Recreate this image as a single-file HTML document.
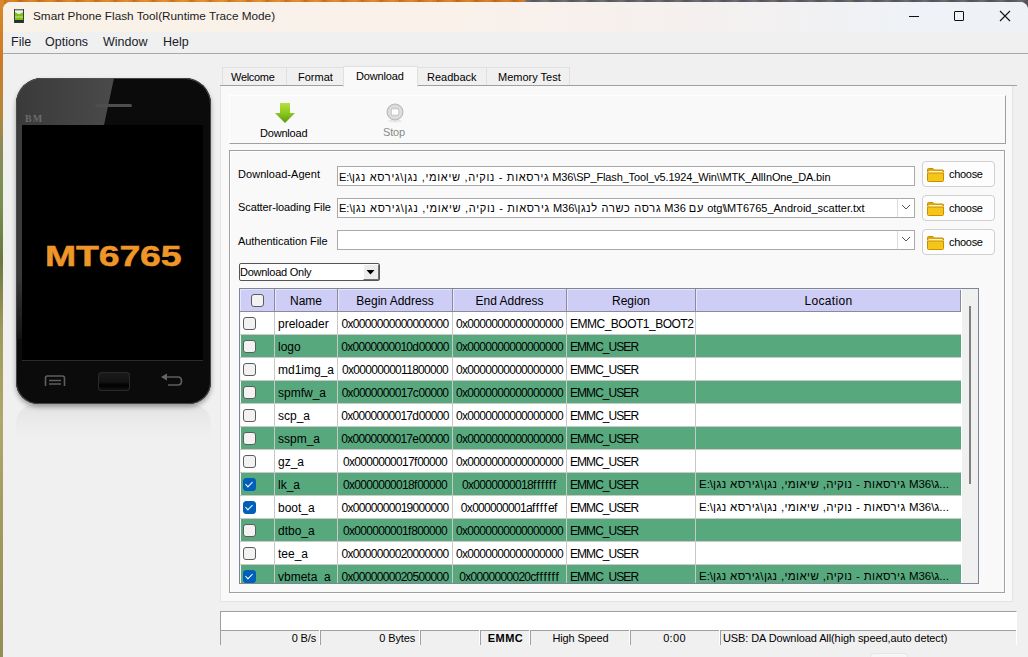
<!DOCTYPE html>
<html><head><meta charset="utf-8">
<style>
*{box-sizing:border-box}
html,body{margin:0;padding:0}
body{width:1028px;height:657px;overflow:hidden;position:relative;font-family:"Liberation Sans",sans-serif;background:#4b5262}
.a{position:absolute}
#wp{left:0;top:0;width:1028px;height:657px;background:repeating-linear-gradient(90deg,rgba(90,40,0,0.25) 0,rgba(90,40,0,0) 7px,rgba(255,200,80,0.15) 13px,rgba(90,40,0,0.1) 19px),linear-gradient(90deg,#d47c22 0,#e08a2c 200px,#d8802a 400px,#d27624 524px,#5c6272 526px,#555b6c 1028px)}
#wpl{left:0;top:0;width:4px;height:657px;background:linear-gradient(180deg,#d9892c 0,#cc7a26 60px,#b8863a 110px,#8a8a58 150px,#7a9050 200px,#6a7840 260px,#a09a58 330px,#b0a868 420px,#a29a5e 520px,#958d56 657px)}
#win{left:3px;top:2px;width:1025px;height:670px;background:#f0f0f0;border-radius:8px 8px 0 0;overflow:hidden}
#title{left:3px;top:2px;width:1025px;height:30px;border-radius:8px 8px 0 0;background:linear-gradient(90deg,#f9f2e8 0,#f9f1ea 450px,#f6f0ee 650px,#eff2f6 900px,#eef2f6 1025px)}
.tx{white-space:nowrap;line-height:1}
.ui{font-size:12px;color:#1b1b1b}
.t11{font-size:11px;color:#000;letter-spacing:0px}
.line{background:#a0a0a0}
.fl{font-size:11px;color:#000;white-space:nowrap;line-height:1;letter-spacing:0.05px}
.he{letter-spacing:0.7px}
.fld{position:absolute;left:337px;width:578px;height:20px;background:#fff;border:1px solid #a9a9a9}
.fld .v{position:absolute;left:1px;top:5px}
.ddb{position:absolute;right:0;top:0;width:17px;height:18px;background:#fff;border-left:1px solid #dcdcdc}
.ddb svg{position:absolute;left:3px;top:5px}
.btn{position:absolute;left:922px;width:73px;height:26px;background:#fdfdfd;border:1px solid #d0d0d0;border-radius:4px}
.btn .ic{position:absolute;left:4px;top:6px;width:17px;height:14px}
.btn .bt{position:absolute;left:26px;top:7px}
#tbl{position:absolute;left:239px;top:288px;width:740px;height:296px;border:1px solid #7c8694;background:#fff;overflow:hidden}
.hdr{position:absolute;left:0;top:0;width:721px;height:23px;background:#cdcdf5;border-bottom:1px solid #8a8a9c;border-right:1px solid #8a8a9c}
.hc{position:absolute;top:0;height:22px;border-right:1px solid #8a8a9c;box-shadow:inset 1px 1px 0 #e6e6fc;text-align:center;padding-top:6px;font-size:12px!important;letter-spacing:0px!important}
.row{position:absolute;left:0;width:721px;height:23px;background:#fff;border-bottom:1px solid #cdc8c8}
.row.g{background:#57a87d}
.row::before{content:"";position:absolute;left:0;top:0;width:1px;height:22px;background:#f4f4f4;z-index:1}
.c{position:absolute;top:0;height:22px;padding-top:6px;border-right:1px solid #c8c8c8;font-size:12px;white-space:nowrap;line-height:1;letter-spacing:0px;color:#000;overflow:hidden}
.row .c.ck{left:0;width:35px}
.row .c.nm{left:35px;width:63px;padding-left:3px}
.row .c.bg{left:98px;width:115px;text-align:center;letter-spacing:-0.7px}
.row .c.en{left:213px;width:114px;text-align:center;letter-spacing:-0.7px}
.row .c.rg{left:327px;width:129px;padding-left:3px;letter-spacing:-0.5px}
.row .c.lc{left:456px;width:265px;padding-left:3px;border-right:none;font-size:11.5px}
.cb{position:absolute;left:3px;top:5px;width:13px;height:13px;border:1px solid #5c5c5c;border-radius:3px;background:#f2f2f2}
.cb.on{background:#005fb8;border-color:#005fb8}
.cb.on::after{content:"";position:absolute;left:3px;top:1px;width:3px;height:6px;border:solid #fff;border-width:0 1.5px 1.5px 0;transform:rotate(45deg)}
#sb{position:absolute;left:721px;top:0;width:17px;height:294px;background:#f0f0f0;border-left:1px solid #fff}
.st{position:absolute;top:630px;height:15px;background:#f0f0f0;border-top:1px solid #a0a0a0;border-left:1px solid #a0a0a0}
.st .tx{position:absolute;top:2px;font-size:11px;line-height:1;letter-spacing:-0.15px;color:#000;white-space:nowrap}

</style></head>
<body>
<div id="wp" class="a"></div>
<div id="wpl" class="a"></div>
<div id="win" class="a"></div>
<div id="title" class="a"></div>
<!-- app icon -->
<svg class="a" style="left:14px;top:9px" width="10" height="14" viewBox="0 0 10 14"><rect x="0" y="0" width="10" height="14" fill="#3c3c40"/><rect x="1" y="0.5" width="8" height="1" fill="#a8a8a8"/><rect x="1" y="1.5" width="8" height="9.5" fill="#7cc010"/><path d="M1 1.5H9V3.2L5 5.2L1 3.2Z" fill="#eef0f4"/><rect x="1" y="7.5" width="8" height="1" fill="#c8e8a0"/><rect x="1" y="11" width="8" height="2.5" fill="#2a2a30"/></svg>
<!-- title text -->
<div class="a tx ui" style="left:33px;top:10px;font-size:11.75px">Smart Phone Flash Tool(Runtime Trace Mode)</div>
<!-- window controls -->
<div class="a" style="left:909px;top:16px;width:10px;height:1px;background:#111"></div>
<div class="a" style="left:954px;top:11px;width:10px;height:10px;border:1px solid #111;border-radius:1px"></div>
<svg class="a" style="left:999px;top:10px" width="12" height="12" viewBox="0 0 12 12"><path d="M1 1L11 11M11 1L1 11" stroke="#111" stroke-width="1.1"/></svg>
<!-- menu bar -->
<div class="a" style="left:3px;top:32px;width:1025px;height:21px;background:#f0f0f0"></div>
<div class="a tx ui" style="left:11px;top:36px;font-size:12.5px;color:#1a1a2a">File</div>
<div class="a tx ui" style="left:45px;top:36px;font-size:12.5px;color:#1a1a2a">Options</div>
<div class="a tx ui" style="left:103px;top:36px;font-size:12.5px;color:#1a1a2a">Window</div>
<div class="a tx ui" style="left:163px;top:36px;font-size:12.5px;color:#1a1a2a">Help</div>
<div class="a line" style="left:3px;top:53px;width:1025px;height:1px;background:#a8a8a8"></div>


<!-- phone -->
<div class="a" style="left:16px;top:404px;width:195px;height:34px;border-radius:20px 20px 0 0;background:linear-gradient(180deg,rgba(0,0,0,0.05),rgba(0,0,0,0.0))"></div>
<div class="a" style="left:16px;top:78px;width:195px;height:326px;border-radius:26px 26px 22px 22px;background:#0b0b0b;box-shadow:inset 0 0 0 1px #2a2a2a, 0 3px 5px rgba(0,0,0,0.35);overflow:hidden">
  <svg style="position:absolute;left:0;top:0" width="195" height="60"><defs><linearGradient id="gl" x1="0" y1="0" x2="1" y2="0"><stop offset="0" stop-color="#3a3a3a"/><stop offset="1" stop-color="#4a4a4a"/></linearGradient></defs><path d="M0 0H98L88 47H0Z" fill="url(#gl)"/></svg>
</div>
<div class="a" style="left:16px;top:124px;width:6px;height:215px;background:linear-gradient(180deg,#3c3c3c 0,#3a3a3a 150px,#141414 215px)"></div>
<div class="a" style="left:16px;top:78px;width:195px;height:326px;border-radius:26px 26px 22px 22px;box-shadow:inset 0 0 0 1px rgba(90,90,90,0.55)"></div>
<div class="a" style="left:25px;top:114px;font-family:'Liberation Serif',serif;font-weight:bold;font-size:10px;line-height:1;color:#6a6a6a;letter-spacing:1px">BM</div>
<div class="a" style="left:95px;top:104px;width:37px;height:3px;border-radius:1.5px;background:#4e4e4e"></div>
<div class="a" style="left:22px;top:125px;width:181px;height:235px;background:#000"></div>
<div class="a" style="left:22px;top:360px;width:181px;height:1px;background:#2c2c2c"></div>
<div class="a" style="left:45px;top:242px;font-weight:bold;font-size:29px;line-height:1;color:#ee9628;transform:scaleX(1.29);transform-origin:0 0;letter-spacing:-0.1px;white-space:nowrap;-webkit-text-stroke:0.5px #ee9628">MT6765</div>
<!-- nav buttons -->
<svg class="a" style="left:44px;top:375px" width="22" height="12" viewBox="0 0 22 12"><path d="M1.5 11V3Q1.5 1 3.5 1H18.5Q20.5 1 20.5 3V11" fill="none" stroke="#5e5e5e" stroke-width="1.6"/><path d="M5 5.5H17M5 9H17" stroke="#5e5e5e" stroke-width="1.4"/></svg>
<div class="a" style="left:98px;top:372px;width:32px;height:19px;border-radius:4px;background:linear-gradient(180deg,#1a1a1a 0,#141414 50%,#000 70%,#151515 100%);box-shadow:inset 0 0 0 1px #2a2a2a"></div>
<svg class="a" style="left:160px;top:373px" width="23" height="14" viewBox="0 0 23 14"><path d="M1 4L7 0.5V7.5Z" fill="#666"/><path d="M6 4H18Q21.5 4 21.5 8Q21.5 12 18 12H8" fill="none" stroke="#5e5e5e" stroke-width="1.7"/></svg>

<!-- tab pane -->
<div class="a" style="left:220px;top:85px;width:793px;height:517px;background:#f9f9f9;border-left:1px solid #e3e3e3;border-right:1px solid #e3e3e3;border-bottom:1px solid #e3e3e3"></div>
<!-- tabs -->
<div class="a" style="left:222px;top:67px;width:65px;height:19px;background:#f0f0f0;border:1px solid #e0e0e0;border-bottom:none"></div>
<div class="a" style="left:286px;top:67px;width:58px;height:19px;background:#f0f0f0;border:1px solid #e0e0e0;border-bottom:none"></div>
<div class="a" style="left:486px;top:67px;width:84px;height:19px;background:#f0f0f0;border:1px solid #e0e0e0;border-bottom:none"></div>
<div class="a" style="left:417px;top:67px;width:70px;height:19px;background:#f0f0f0;border:1px solid #e0e0e0;border-bottom:none"></div>
<div class="a line" style="left:220px;top:85px;width:797px;height:1px;background:#a0a0a0"></div>
<div class="a" style="left:343px;top:66px;width:75px;height:21px;background:#f9f9f9;border:1px solid #e0e0e0;border-bottom:none"></div>
<div class="a tx t11" style="left:231px;top:72px;letter-spacing:-0.3px">Welcome</div>
<div class="a tx t11" style="left:298px;top:72px">Format</div>
<div class="a tx t11" style="left:356px;top:71px;letter-spacing:-0.15px">Download</div>
<div class="a tx t11" style="left:427px;top:72px">Readback</div>
<div class="a tx t11" style="left:498px;top:72px">Memory Test</div>

<!-- toolbar -->
<div class="a" style="left:229px;top:95px;width:777px;height:49px;border-top:1px solid #fff;border-left:1px solid #fff;border-right:1px solid #a0a0a0;border-bottom:1px solid #a0a0a0"></div>

<!-- group box -->
<div class="a" style="left:230px;top:151px;width:776px;height:443px;border:1px solid #fff"></div>
<div class="a" style="left:229px;top:150px;width:776px;height:443px;border:1px solid #a0a0a0"></div>

<!-- progress -->
<div class="a" style="left:220px;top:611px;width:797px;height:20px;background:#fff;border-top:1px solid #a0a0a0;border-left:1px solid #a0a0a0;border-right:1px solid #fff"></div>
<!-- status bar -->
<div class="a" style="left:220px;top:630px;width:797px;height:15px;background:#fff"></div>

<!-- toolbar icons -->
<svg class="a" style="left:275px;top:103px" width="20" height="20" viewBox="0 0 20 20"><defs><linearGradient id="ga" x1="0" y1="0" x2="0" y2="1"><stop offset="0" stop-color="#b8e040"/><stop offset="0.5" stop-color="#8cc820"/><stop offset="1" stop-color="#5a9a10"/></linearGradient></defs><path d="M5 0H15V10H20L10 20L0 10H5Z" fill="url(#ga)"/></svg>
<div class="a fl" style="left:260px;top:128px;letter-spacing:-0.2px">Download</div>
<svg class="a" style="left:386px;top:103px" width="18" height="20" viewBox="0 0 18 20"><ellipse cx="9" cy="18" rx="7" ry="1.5" fill="#e8e8e8"/><circle cx="9" cy="9" r="8" fill="#d6d6d6" stroke="#b8b8b8" stroke-width="1"/><circle cx="9" cy="9" r="6" fill="none" stroke="#e4e4e4" stroke-width="1"/><rect x="5.5" y="6" width="7" height="6" fill="#fff" stroke="#c0c0c0" stroke-width="0.6"/></svg>
<div class="a fl" style="left:383px;top:127px;color:#8a8a8a;letter-spacing:-0.2px">Stop</div>

<!-- form -->
<div class="a fl" style="left:238px;top:169px">Download-Agent</div>
<div class="a fl" style="left:238px;top:202px;letter-spacing:-0.1px">Scatter-loading File</div>
<div class="a fl" style="left:238px;top:236px;letter-spacing:-0.05px">Authentication File</div>
<div class="fld" style="top:166px"><div class="v fl" dir="ltr" style="letter-spacing:-0.15px">E:\<span class="he">גירסאות - נוקיה, שיאומי, נגן\גירסא נגן</span> M36\SP_Flash_Tool_v5.1924_Win\\MTK_AllInOne_DA.bin</div></div>
<div class="fld" style="top:198px"><div class="v fl" dir="ltr" style="letter-spacing:0px;top:4px">E:\<span class="he">גירסאות - נוקיה, שיאומי, נגן\גירסא נגן</span> M36\<span class="he">גרסה כשרה לנגן</span> M36 <span class="he">עם</span> otg<span style="letter-spacing:-1.5px">\</span>\MT6765_Android_scatter.txt</div><div class="ddb"><svg width="10" height="6" viewBox="0 0 10 6"><path d="M1 1L5 5L9 1" fill="none" stroke="#555" stroke-width="1"/></svg></div></div>
<div class="fld" style="top:230px"><div class="ddb"><svg width="10" height="6" viewBox="0 0 10 6"><path d="M1 1L5 5L9 1" fill="none" stroke="#555" stroke-width="1"/></svg></div></div>
<div class="btn" style="top:161px"><svg class="ic" viewBox="0 0 17 14" width="17" height="14"><path d="M0.5 1.5Q0.5 0.5 1.5 0.5H6L7.5 2H15.5Q16.5 2 16.5 3V4H0.5Z" fill="#e0a800" stroke="#c89000" stroke-width="1"/><rect x="1.5" y="3" width="14" height="2" fill="#fff4c0"/><path d="M0.5 5H16.5V12.5Q16.5 13.5 15.5 13.5H1.5Q0.5 13.5 0.5 12.5Z" fill="#f5c518" stroke="#c89000" stroke-width="1"/></svg><div class="bt fl" style="letter-spacing:-0.3px">choose</div></div>
<div class="btn" style="top:195px"><svg class="ic" viewBox="0 0 17 14" width="17" height="14"><path d="M0.5 1.5Q0.5 0.5 1.5 0.5H6L7.5 2H15.5Q16.5 2 16.5 3V4H0.5Z" fill="#e0a800" stroke="#c89000" stroke-width="1"/><rect x="1.5" y="3" width="14" height="2" fill="#fff4c0"/><path d="M0.5 5H16.5V12.5Q16.5 13.5 15.5 13.5H1.5Q0.5 13.5 0.5 12.5Z" fill="#f5c518" stroke="#c89000" stroke-width="1"/></svg><div class="bt fl" style="letter-spacing:-0.3px">choose</div></div>
<div class="btn" style="top:229px"><svg class="ic" viewBox="0 0 17 14" width="17" height="14"><path d="M0.5 1.5Q0.5 0.5 1.5 0.5H6L7.5 2H15.5Q16.5 2 16.5 3V4H0.5Z" fill="#e0a800" stroke="#c89000" stroke-width="1"/><rect x="1.5" y="3" width="14" height="2" fill="#fff4c0"/><path d="M0.5 5H16.5V12.5Q16.5 13.5 15.5 13.5H1.5Q0.5 13.5 0.5 12.5Z" fill="#f5c518" stroke="#c89000" stroke-width="1"/></svg><div class="bt fl" style="letter-spacing:-0.3px">choose</div></div>

<!-- combo -->
<div class="a" style="left:239px;top:263px;width:141px;height:18px;background:#fff;border:1px solid #555;border-radius:2px"></div>
<div class="a fl" style="left:240px;top:267px;letter-spacing:-0.25px">Download Only</div>
<div class="a" style="left:363px;top:264px;width:16px;height:16px;background:#ececec;border-left:1px solid #fff;border-top:1px solid #fff;border-right:1px solid #707070;border-bottom:1px solid #707070"></div>
<svg class="a" style="left:366px;top:270px" width="9" height="6" viewBox="0 0 9 6"><path d="M0.5 0H8.5L4.5 4.5Z" fill="#000"/></svg>

<!-- table -->
<div id="tbl">
<div class="hdr">
<div class="hc" style="left:0;width:35px"><div class="cb" style="left:11px;top:5px"></div></div>
<div class="hc fl" style="left:35px;width:63px">Name</div>
<div class="hc fl" style="left:98px;width:115px">Begin Address</div>
<div class="hc fl" style="left:213px;width:114px">End Address</div>
<div class="hc fl" style="left:327px;width:129px">Region</div>
<div class="hc fl" style="left:456px;width:265px;border-right:none;letter-spacing:0.3px!important">Location</div>
</div>
<div class="row" style="top:23px"><div class="c ck"><div class="cb"></div></div><div class="c nm">preloader</div><div class="c bg">0x0000000000000000</div><div class="c en">0x0000000000000000</div><div class="c rg">EMMC_BOOT1_BOOT2</div><div class="c lc" dir="ltr"></div></div>
<div class="row g" style="top:46px"><div class="c ck"><div class="cb"></div></div><div class="c nm">logo</div><div class="c bg">0x0000000010<span style="letter-spacing:-0.2px">d</span>00000</div><div class="c en">0x0000000000000000</div><div class="c rg" style="letter-spacing:-0.95px">EMMC_USER</div><div class="c lc" dir="ltr"></div></div>
<div class="row" style="top:69px"><div class="c ck"><div class="cb"></div></div><div class="c nm">md1img_a</div><div class="c bg">0x0000000011800000</div><div class="c en">0x0000000000000000</div><div class="c rg" style="letter-spacing:-0.95px">EMMC_USER</div><div class="c lc" dir="ltr"></div></div>
<div class="row g" style="top:92px"><div class="c ck"><div class="cb"></div></div><div class="c nm">spmfw_a</div><div class="c bg">0x0000000017<span style="letter-spacing:-0.2px">c</span>00000</div><div class="c en">0x0000000000000000</div><div class="c rg" style="letter-spacing:-0.95px">EMMC_USER</div><div class="c lc" dir="ltr"></div></div>
<div class="row" style="top:115px"><div class="c ck"><div class="cb"></div></div><div class="c nm">scp_a</div><div class="c bg">0x0000000017<span style="letter-spacing:-0.2px">d</span>00000</div><div class="c en">0x0000000000000000</div><div class="c rg" style="letter-spacing:-0.95px">EMMC_USER</div><div class="c lc" dir="ltr"></div></div>
<div class="row g" style="top:138px"><div class="c ck"><div class="cb"></div></div><div class="c nm">sspm_a</div><div class="c bg">0x0000000017<span style="letter-spacing:-0.2px">e</span>00000</div><div class="c en">0x0000000000000000</div><div class="c rg" style="letter-spacing:-0.95px">EMMC_USER</div><div class="c lc" dir="ltr"></div></div>
<div class="row" style="top:161px"><div class="c ck"><div class="cb"></div></div><div class="c nm">gz_a</div><div class="c bg">0x0000000017<span style="letter-spacing:-0.2px">f</span>00000</div><div class="c en">0x0000000000000000</div><div class="c rg" style="letter-spacing:-0.95px">EMMC_USER</div><div class="c lc" dir="ltr"></div></div>
<div class="row g" style="top:184px"><div class="c ck"><div class="cb on"></div></div><div class="c nm">lk_a</div><div class="c bg">0x0000000018<span style="letter-spacing:-0.2px">f</span>00000</div><div class="c en">0x0000000018<span style="letter-spacing:0.85px">ffffff</span></div><div class="c rg" style="letter-spacing:-0.95px">EMMC_USER</div><div class="c lc" dir="ltr">E:\<span class="he" style="letter-spacing:0.37px">גירסאות - נוקיה, שיאומי, נגן\גירסא נגן</span> M36\ג...</div></div>
<div class="row" style="top:207px"><div class="c ck"><div class="cb on"></div></div><div class="c nm">boot_a</div><div class="c bg">0x0000000019000000</div><div class="c en">0x000000001a<span style="letter-spacing:0.85px">ffff</span>e<span style="letter-spacing:0.85px">f</span></div><div class="c rg" style="letter-spacing:-0.95px">EMMC_USER</div><div class="c lc" dir="ltr">E:\<span class="he" style="letter-spacing:0.37px">גירסאות - נוקיה, שיאומי, נגן\גירסא נגן</span> M36\ג...</div></div>
<div class="row g" style="top:230px"><div class="c ck"><div class="cb"></div></div><div class="c nm">dtbo_a</div><div class="c bg">0x000000001<span style="letter-spacing:-0.2px">f</span>800000</div><div class="c en">0x0000000000000000</div><div class="c rg" style="letter-spacing:-0.95px">EMMC_USER</div><div class="c lc" dir="ltr"></div></div>
<div class="row" style="top:253px"><div class="c ck"><div class="cb"></div></div><div class="c nm">tee_a</div><div class="c bg">0x0000000020000000</div><div class="c en">0x0000000000000000</div><div class="c rg" style="letter-spacing:-0.95px">EMMC_USER</div><div class="c lc" dir="ltr"></div></div>
<div class="row g" style="top:276px"><div class="c ck"><div class="cb on"></div></div><div class="c nm">vbmeta_a</div><div class="c bg">0x0000000020500000</div><div class="c en">0x0000000020c<span style="letter-spacing:0.85px">ffffff</span></div><div class="c rg" style="letter-spacing:-0.95px">EMMC_USER</div><div class="c lc" dir="ltr">E:\<span class="he" style="letter-spacing:0.37px">גירסאות - נוקיה, שיאומי, נגן\גירסא נגן</span> M36\ג...</div></div>
<div id="sb"><div style="position:absolute;left:7px;top:17px;width:2px;height:178px;background:#808080"></div></div>
</div>

<!-- status cells -->
<div class="st" style="left:220px;width:99px"><div class="tx" style="right:3px">0 B/s</div></div>
<div class="st" style="left:320px;width:99px"><div class="tx" style="right:4px">0 Bytes</div></div>
<div class="st" style="left:420px;width:59px"></div>
<div class="st" style="left:480px;width:49px"><div class="tx" style="left:0;width:49px;text-align:center;font-weight:bold;letter-spacing:0.5px">EMMC</div></div>
<div class="st" style="left:530px;width:99px"><div class="tx" style="left:0;width:99px;text-align:center">High Speed</div></div>
<div class="st" style="left:630px;width:89px"><div class="tx" style="left:0;width:87px;text-align:center;letter-spacing:0.3px">0:00</div></div>
<div class="st" style="left:720px;width:296px"><div class="tx" style="left:2px;letter-spacing:-0.1px">USB: DA Download All(high speed,auto detect)</div></div>

<div class="a" style="left:870px;top:653px;width:38px;height:8px;background:#f6f6f6;border:1px solid #e6e6e6;border-radius:4px"></div>
</body></html>
